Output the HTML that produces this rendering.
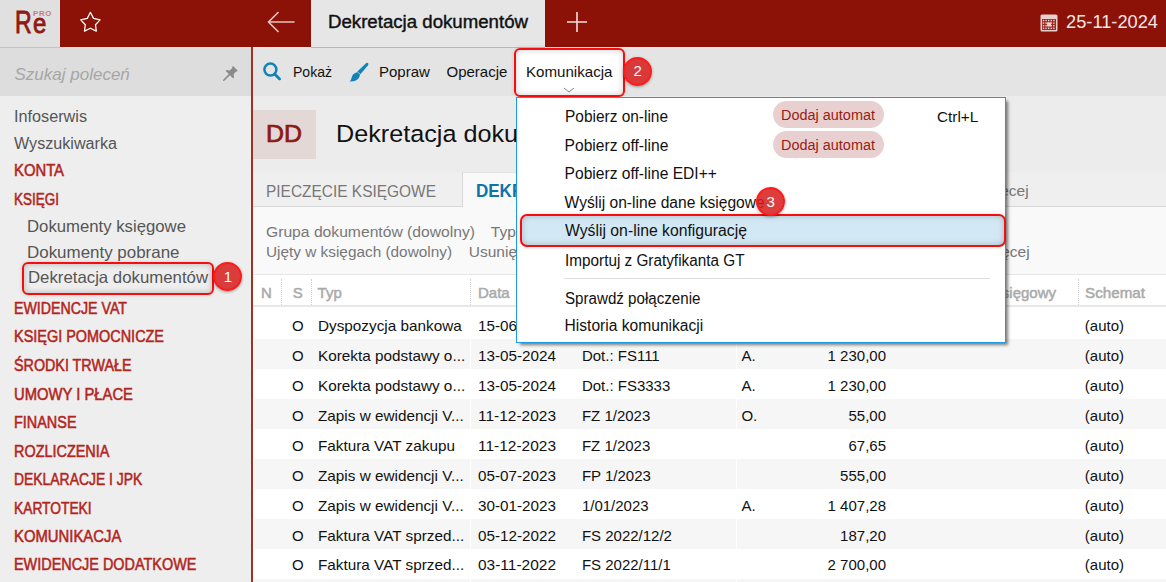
<!DOCTYPE html><html><head><meta charset="utf-8"><style>html,body{margin:0;padding:0;width:1166px;height:582px;overflow:hidden;background:#eee;position:relative}.t{position:absolute;white-space:pre;font-family:"Liberation Sans", sans-serif}</style></head><body><div style="position:absolute;left:0px;top:0px;width:1166px;height:47px;background:#8c1107;"></div>
<div style="position:absolute;left:0px;top:0px;width:60px;height:47px;background:#e0e0e0;"></div>
<div style="position:absolute;left:311px;top:0px;width:234px;height:47px;background:#e6e6e6;"></div>
<span id="t3" class="t" style="left:14.50px;transform-origin:left 26px;top:7.00px;font-size:31px;line-height:31px;color:#8f1a12;font-weight:400;font-style:normal;-webkit-text-stroke:0.9px #8f1a12;transform:scale(0.7458,1.0000);">R</span>
<span id="t4" class="t" style="left:33.00px;transform-origin:left 24px;top:9.00px;font-size:28.5px;line-height:28.5px;color:#8f1a12;font-weight:400;font-style:normal;-webkit-text-stroke:0.9px #8f1a12;transform:scale(0.8386,1.0000);">e</span>
<span id="t5" class="t" style="left:33.00px;transform-origin:left 6px;top:10.00px;font-size:7.8px;line-height:7.8px;color:#c47d79;font-weight:700;font-style:normal;letter-spacing:0.8px;transform:scale(0.9950,1.0000);">PRO</span>
<span id="t6" class="t" style="left:327.70px;transform-origin:left 14px;top:14.00px;font-size:17.5px;line-height:17.5px;color:#111;font-weight:400;font-style:normal;-webkit-text-stroke:0.4px #111;transform:scale(1.0653,1.0000);">Dekretacja dokumentów</span>
<span id="t7" class="t" style="left:1065.60px;transform-origin:left 15px;top:13.00px;font-size:18.2px;line-height:18.2px;color:#f4e6e6;font-weight:400;font-style:normal;transform:scale(1.0034,1.0000);">25-11-2024</span>
<div style="position:absolute;left:0px;top:47px;width:251px;height:49px;background:#dddddd;"></div>
<div style="position:absolute;left:0px;top:47px;width:60px;height:1px;background:#d7bcb8;"></div>
<div style="position:absolute;left:0px;top:96px;width:251px;height:486px;background:#eeeeee;"></div>
<div style="position:absolute;left:251px;top:47px;width:2px;height:535px;background:#9d3325;"></div>
<span id="t12" class="t" style="left:14.50px;transform-origin:left 14px;top:66.00px;font-size:17px;line-height:17px;color:#a6a6a6;font-weight:400;font-style:italic;">Szukaj poleceń</span>
<span id="t13" class="t" style="left:13.90px;transform-origin:left 13px;top:109.00px;font-size:16px;line-height:16px;color:#555555;font-weight:400;font-style:normal;transform:scale(1.0134,1.0000);">Infoserwis</span>
<span id="t14" class="t" style="left:13.90px;transform-origin:left 13px;top:136.00px;font-size:16px;line-height:16px;color:#555555;font-weight:400;font-style:normal;transform:scale(1.0089,1.0000);">Wyszukiwarka</span>
<span id="t15" class="t" style="left:13.90px;transform-origin:left 13px;top:163.00px;font-size:15.3px;line-height:15.3px;color:#b3241b;font-weight:400;font-style:normal;-webkit-text-stroke:0.5px #b3241b;transform:scale(0.9697,1.0400);">KONTA</span>
<span id="t16" class="t" style="left:13.90px;transform-origin:left 13px;top:192.00px;font-size:15.3px;line-height:15.3px;color:#b3241b;font-weight:400;font-style:normal;-webkit-text-stroke:0.5px #b3241b;transform:scale(0.8821,1.0400);">KSIĘGI</span>
<span id="t17" class="t" style="left:27.30px;transform-origin:left 14px;top:218.00px;font-size:16.5px;line-height:16.5px;color:#555555;font-weight:400;font-style:normal;transform:scale(1.0138,1.0000);">Dokumenty księgowe</span>
<span id="t18" class="t" style="left:27.30px;transform-origin:left 14px;top:244.00px;font-size:16.5px;line-height:16.5px;color:#555555;font-weight:400;font-style:normal;transform:scale(1.0263,1.0000);">Dokumenty pobrane</span>
<div style="position:absolute;left:21.5px;top:262px;width:192.5px;height:32.5px;background:transparent;border:2.5px solid #f70d0d;border-radius:6px;box-sizing:border-box;box-shadow:inset 0 0 6px rgba(0,0,0,.25), 0 0 4px rgba(0,0,0,.12)"></div>
<span id="t20" class="t" style="left:27.50px;transform-origin:left 14px;top:269.00px;font-size:16.5px;line-height:16.5px;color:#555555;font-weight:400;font-style:normal;transform:scale(1.0169,1.0000);">Dekretacja dokumentów</span>
<span id="t21" class="t" style="left:14.00px;transform-origin:left 13px;top:301.00px;font-size:15.3px;line-height:15.3px;color:#b3241b;font-weight:400;font-style:normal;-webkit-text-stroke:0.5px #b3241b;transform:scale(0.9275,1.0400);">EWIDENCJE VAT</span>
<span id="t22" class="t" style="left:14.00px;transform-origin:left 13px;top:329.00px;font-size:15.3px;line-height:15.3px;color:#b3241b;font-weight:400;font-style:normal;-webkit-text-stroke:0.5px #b3241b;transform:scale(0.9438,1.0400);">KSIĘGI POMOCNICZE</span>
<span id="t23" class="t" style="left:14.00px;transform-origin:left 13px;top:358.00px;font-size:15.3px;line-height:15.3px;color:#b3241b;font-weight:400;font-style:normal;-webkit-text-stroke:0.5px #b3241b;transform:scale(0.9360,1.0400);">ŚRODKI TRWAŁE</span>
<span id="t24" class="t" style="left:14.00px;transform-origin:left 13px;top:387.00px;font-size:15.3px;line-height:15.3px;color:#b3241b;font-weight:400;font-style:normal;-webkit-text-stroke:0.5px #b3241b;transform:scale(0.9677,1.0400);">UMOWY I PŁACE</span>
<span id="t25" class="t" style="left:14.00px;transform-origin:left 13px;top:415.00px;font-size:15.3px;line-height:15.3px;color:#b3241b;font-weight:400;font-style:normal;-webkit-text-stroke:0.5px #b3241b;transform:scale(0.9427,1.0400);">FINANSE</span>
<span id="t26" class="t" style="left:14.00px;transform-origin:left 13px;top:444.00px;font-size:15.3px;line-height:15.3px;color:#b3241b;font-weight:400;font-style:normal;-webkit-text-stroke:0.5px #b3241b;transform:scale(0.9432,1.0400);">ROZLICZENIA</span>
<span id="t27" class="t" style="left:14.00px;transform-origin:left 13px;top:472.00px;font-size:15.3px;line-height:15.3px;color:#b3241b;font-weight:400;font-style:normal;-webkit-text-stroke:0.5px #b3241b;transform:scale(0.9091,1.0400);">DEKLARACJE I JPK</span>
<span id="t28" class="t" style="left:14.00px;transform-origin:left 13px;top:501.00px;font-size:15.3px;line-height:15.3px;color:#b3241b;font-weight:400;font-style:normal;-webkit-text-stroke:0.5px #b3241b;transform:scale(0.9007,1.0400);">KARTOTEKI</span>
<span id="t29" class="t" style="left:14.00px;transform-origin:left 13px;top:529.00px;font-size:15.3px;line-height:15.3px;color:#b3241b;font-weight:400;font-style:normal;-webkit-text-stroke:0.5px #b3241b;transform:scale(0.9710,1.0400);">KOMUNIKACJA</span>
<span id="t30" class="t" style="left:14.00px;transform-origin:left 13px;top:557.00px;font-size:15.3px;line-height:15.3px;color:#b3241b;font-weight:400;font-style:normal;-webkit-text-stroke:0.5px #b3241b;transform:scale(0.9427,1.0400);">EWIDENCJE DODATKOWE</span>
<div style="position:absolute;left:253px;top:47px;width:913px;height:49px;background:#e4e4e4;"></div>
<div style="position:absolute;left:253px;top:47px;width:913px;height:1px;background:#ebebeb;"></div>
<div style="position:absolute;left:311px;top:47px;width:234px;height:1px;background:#cdb0aa;"></div>
<div style="position:absolute;left:253px;top:96px;width:913px;height:76px;background:#ececec;"></div>
<div style="position:absolute;left:253px;top:110px;width:63px;height:49px;background:#e4d8d6;"></div>
<span id="t36" class="t" style="left:266.20px;transform-origin:left 19px;top:123.00px;font-size:23.5px;line-height:23.5px;color:#8b1a12;font-weight:400;font-style:normal;-webkit-text-stroke:0.7px #8b1a12;transform:scale(1.0603,1.0000);">DD</span>
<span id="t37" class="t" style="left:335.70px;transform-origin:left 20px;top:122.00px;font-size:24.5px;line-height:24.5px;color:#111;font-weight:400;font-style:normal;transform:scale(1.0280,1.0000);">Dekretacja dokumentów</span>
<div style="position:absolute;left:253px;top:172px;width:913px;height:34px;background:#efefef;"></div>
<div style="position:absolute;left:253px;top:206px;width:913px;height:1px;background:#d6d6d6;"></div>
<div style="position:absolute;left:462px;top:172px;width:176px;height:35px;background:#f9f9f9;border-left:1px solid #d8d8d8;border-top:1px solid #e2e2e2;box-sizing:border-box"></div>
<span id="t41" class="t" style="left:266.20px;transform-origin:left 14px;top:183.00px;font-size:17px;line-height:17px;color:#777777;font-weight:400;font-style:normal;transform:scale(0.9089,1.0000);">PIECZĘCIE KSIĘGOWE</span>
<span id="t42" class="t" style="left:475.90px;transform-origin:left 14px;top:183.00px;font-size:17.5px;line-height:17.5px;color:#0f72a8;font-weight:700;font-style:normal;transform:scale(0.9715,1.0000);">DEKRETACJE</span>
<span id="t43" class="t" style="right:137.40px;transform-origin:right 13px;top:183.00px;font-size:15.5px;line-height:15.5px;color:#777777;font-weight:400;font-style:normal;">Pokaż więcej</span>
<div style="position:absolute;left:253px;top:207px;width:913px;height:68px;background:#f9f9f9;"></div>
<div style="position:absolute;left:253px;top:274px;width:913px;height:1px;background:#e6e6e6;"></div>
<span id="t46" class="t" style="left:265.70px;transform-origin:left 13px;top:224.00px;font-size:15.5px;line-height:15.5px;color:#777777;font-weight:400;font-style:normal;transform:scale(1.0107,1.0000);">Grupa dokumentów (dowolny)</span>
<span id="t47" class="t" style="left:490.80px;transform-origin:left 13px;top:224.00px;font-size:15.5px;line-height:15.5px;color:#777777;font-weight:400;font-style:normal;">Typ dokumentu (dowolny)</span>
<span id="t48" class="t" style="left:265.70px;transform-origin:left 13px;top:244.00px;font-size:15.5px;line-height:15.5px;color:#777777;font-weight:400;font-style:normal;transform:scale(0.9904,1.0000);">Ujęty w księgach (dowolny)</span>
<span id="t49" class="t" style="left:468.80px;transform-origin:left 13px;top:244.00px;font-size:15.5px;line-height:15.5px;color:#777777;font-weight:400;font-style:normal;">Usunięte (dowolny)</span>
<span id="t50" class="t" style="right:136.40px;transform-origin:right 13px;top:244.00px;font-size:15.5px;line-height:15.5px;color:#777777;font-weight:400;font-style:normal;">Pokaż więcej</span>
<div style="position:absolute;left:253px;top:275px;width:913px;height:307px;background:#ffffff;"></div>
<div style="position:absolute;left:253px;top:305px;width:913px;height:2px;background:#e8e8e8;"></div>
<span id="t53" class="t" style="left:261.00px;transform-origin:left 13px;top:285.00px;font-size:15px;line-height:15px;color:#aaaaaa;font-weight:400;font-style:normal;-webkit-text-stroke:0.5px #aaaaaa;">N</span>
<span id="t54" class="t" style="left:292.80px;transform-origin:left 13px;top:285.00px;font-size:15px;line-height:15px;color:#aaaaaa;font-weight:400;font-style:normal;-webkit-text-stroke:0.5px #aaaaaa;">S</span>
<span id="t55" class="t" style="left:317.60px;transform-origin:left 13px;top:285.00px;font-size:15px;line-height:15px;color:#aaaaaa;font-weight:400;font-style:normal;-webkit-text-stroke:0.5px #aaaaaa;">Typ</span>
<span id="t56" class="t" style="left:478.00px;transform-origin:left 13px;top:285.00px;font-size:15px;line-height:15px;color:#aaaaaa;font-weight:400;font-style:normal;-webkit-text-stroke:0.5px #aaaaaa;">Data</span>
<span id="t57" class="t" style="left:582.00px;transform-origin:left 13px;top:285.00px;font-size:15px;line-height:15px;color:#aaaaaa;font-weight:400;font-style:normal;-webkit-text-stroke:0.5px #aaaaaa;">Dokument</span>
<span id="t58" class="t" style="right:110.00px;transform-origin:right 13px;top:285.00px;font-size:15px;line-height:15px;color:#aaaaaa;font-weight:400;font-style:normal;-webkit-text-stroke:0.5px #aaaaaa;">Konto księgowy</span>
<span id="t59" class="t" style="left:1084.80px;transform-origin:left 13px;top:285.00px;font-size:15px;line-height:15px;color:#aaaaaa;font-weight:400;font-style:normal;-webkit-text-stroke:0.5px #aaaaaa;transform:scale(1.0135,1.0000);">Schemat</span>
<div style="position:absolute;left:281px;top:279px;width:0;height:26px;border-left:1px dotted #cfcfcf"></div>
<div style="position:absolute;left:311px;top:279px;width:0;height:26px;border-left:1px dotted #cfcfcf"></div>
<div style="position:absolute;left:470px;top:279px;width:0;height:26px;border-left:1px dotted #cfcfcf"></div>
<div style="position:absolute;left:1078px;top:279px;width:0;height:26px;border-left:1px dotted #cfcfcf"></div>
<div style="position:absolute;left:254px;top:339.4px;width:912px;height:29.9px;background:#f6f6f6;"></div>
<div style="position:absolute;left:470px;top:339.4px;width:1px;height:29.9px;background:#ffffff;"></div>
<div style="position:absolute;left:736px;top:339.4px;width:1px;height:29.9px;background:#ffffff;"></div>
<div style="position:absolute;left:254px;top:399.2px;width:912px;height:29.9px;background:#f6f6f6;"></div>
<div style="position:absolute;left:470px;top:399.2px;width:1px;height:29.9px;background:#ffffff;"></div>
<div style="position:absolute;left:736px;top:399.2px;width:1px;height:29.9px;background:#ffffff;"></div>
<div style="position:absolute;left:254px;top:459.0px;width:912px;height:29.9px;background:#f6f6f6;"></div>
<div style="position:absolute;left:470px;top:459.0px;width:1px;height:29.9px;background:#ffffff;"></div>
<div style="position:absolute;left:736px;top:459.0px;width:1px;height:29.9px;background:#ffffff;"></div>
<div style="position:absolute;left:254px;top:518.8px;width:912px;height:29.9px;background:#f6f6f6;"></div>
<div style="position:absolute;left:470px;top:518.8px;width:1px;height:29.9px;background:#ffffff;"></div>
<div style="position:absolute;left:736px;top:518.8px;width:1px;height:29.9px;background:#ffffff;"></div>
<div style="position:absolute;left:254px;top:578.6px;width:912px;height:29.9px;background:#f6f6f6;"></div>
<div style="position:absolute;left:470px;top:578.6px;width:1px;height:29.9px;background:#ffffff;"></div>
<div style="position:absolute;left:736px;top:578.6px;width:1px;height:29.9px;background:#ffffff;"></div>
<span id="t79" class="t" style="left:292.00px;transform-origin:left 13px;top:318.00px;font-size:15px;line-height:15px;color:#111;font-weight:400;font-style:normal;">O</span>
<span id="t80" class="t" style="left:318.00px;transform-origin:left 13px;top:318.00px;font-size:15px;line-height:15px;color:#111;font-weight:400;font-style:normal;transform:scale(1.0200,1.0000);">Dyspozycja bankowa</span>
<span id="t81" class="t" style="left:478.00px;transform-origin:left 13px;top:318.00px;font-size:15px;line-height:15px;color:#111;font-weight:400;font-style:normal;transform:scale(1.0165,1.0000);">15-06-2024</span>
<span id="t82" class="t" style="left:1084.80px;transform-origin:left 13px;top:318.00px;font-size:15px;line-height:15px;color:#111;font-weight:400;font-style:normal;">(auto)</span>
<span id="t83" class="t" style="left:292.00px;transform-origin:left 13px;top:348.00px;font-size:15px;line-height:15px;color:#111;font-weight:400;font-style:normal;">O</span>
<span id="t84" class="t" style="left:318.00px;transform-origin:left 13px;top:348.00px;font-size:15px;line-height:15px;color:#111;font-weight:400;font-style:normal;transform:scale(1.0200,1.0000);">Korekta podstawy o...</span>
<span id="t85" class="t" style="left:478.00px;transform-origin:left 13px;top:348.00px;font-size:15px;line-height:15px;color:#111;font-weight:400;font-style:normal;transform:scale(1.0165,1.0000);">13-05-2024</span>
<span id="t86" class="t" style="left:581.90px;transform-origin:left 13px;top:348.00px;font-size:15px;line-height:15px;color:#111;font-weight:400;font-style:normal;">Dot.: FS111</span>
<span id="t87" class="t" style="left:741.40px;transform-origin:left 13px;top:348.00px;font-size:15px;line-height:15px;color:#111;font-weight:400;font-style:normal;">A.</span>
<span id="t88" class="t" style="right:280.00px;transform-origin:right 13px;top:348.00px;font-size:15px;line-height:15px;color:#111;font-weight:400;font-style:normal;">1 230,00</span>
<span id="t89" class="t" style="left:1084.80px;transform-origin:left 13px;top:348.00px;font-size:15px;line-height:15px;color:#111;font-weight:400;font-style:normal;">(auto)</span>
<span id="t90" class="t" style="left:292.00px;transform-origin:left 13px;top:378.00px;font-size:15px;line-height:15px;color:#111;font-weight:400;font-style:normal;">O</span>
<span id="t91" class="t" style="left:318.00px;transform-origin:left 13px;top:378.00px;font-size:15px;line-height:15px;color:#111;font-weight:400;font-style:normal;transform:scale(1.0200,1.0000);">Korekta podstawy o...</span>
<span id="t92" class="t" style="left:478.00px;transform-origin:left 13px;top:378.00px;font-size:15px;line-height:15px;color:#111;font-weight:400;font-style:normal;transform:scale(1.0165,1.0000);">13-05-2024</span>
<span id="t93" class="t" style="left:581.90px;transform-origin:left 13px;top:378.00px;font-size:15px;line-height:15px;color:#111;font-weight:400;font-style:normal;">Dot.: FS3333</span>
<span id="t94" class="t" style="left:741.40px;transform-origin:left 13px;top:378.00px;font-size:15px;line-height:15px;color:#111;font-weight:400;font-style:normal;">A.</span>
<span id="t95" class="t" style="right:280.00px;transform-origin:right 13px;top:378.00px;font-size:15px;line-height:15px;color:#111;font-weight:400;font-style:normal;">1 230,00</span>
<span id="t96" class="t" style="left:1084.80px;transform-origin:left 13px;top:378.00px;font-size:15px;line-height:15px;color:#111;font-weight:400;font-style:normal;">(auto)</span>
<span id="t97" class="t" style="left:292.00px;transform-origin:left 13px;top:408.00px;font-size:15px;line-height:15px;color:#111;font-weight:400;font-style:normal;">O</span>
<span id="t98" class="t" style="left:318.00px;transform-origin:left 13px;top:408.00px;font-size:15px;line-height:15px;color:#111;font-weight:400;font-style:normal;transform:scale(1.0200,1.0000);">Zapis w ewidencji V...</span>
<span id="t99" class="t" style="left:478.00px;transform-origin:left 13px;top:408.00px;font-size:15px;line-height:15px;color:#111;font-weight:400;font-style:normal;transform:scale(1.0314,1.0000);">11-12-2023</span>
<span id="t100" class="t" style="left:581.90px;transform-origin:left 13px;top:408.00px;font-size:15px;line-height:15px;color:#111;font-weight:400;font-style:normal;">FZ 1/2023</span>
<span id="t101" class="t" style="left:741.40px;transform-origin:left 13px;top:408.00px;font-size:15px;line-height:15px;color:#111;font-weight:400;font-style:normal;">O.</span>
<span id="t102" class="t" style="right:280.00px;transform-origin:right 13px;top:408.00px;font-size:15px;line-height:15px;color:#111;font-weight:400;font-style:normal;">55,00</span>
<span id="t103" class="t" style="left:1084.80px;transform-origin:left 13px;top:408.00px;font-size:15px;line-height:15px;color:#111;font-weight:400;font-style:normal;">(auto)</span>
<span id="t104" class="t" style="left:292.00px;transform-origin:left 13px;top:438.00px;font-size:15px;line-height:15px;color:#111;font-weight:400;font-style:normal;">O</span>
<span id="t105" class="t" style="left:318.00px;transform-origin:left 13px;top:438.00px;font-size:15px;line-height:15px;color:#111;font-weight:400;font-style:normal;transform:scale(1.0200,1.0000);">Faktura VAT zakupu</span>
<span id="t106" class="t" style="left:478.00px;transform-origin:left 13px;top:438.00px;font-size:15px;line-height:15px;color:#111;font-weight:400;font-style:normal;transform:scale(1.0314,1.0000);">11-12-2023</span>
<span id="t107" class="t" style="left:581.90px;transform-origin:left 13px;top:438.00px;font-size:15px;line-height:15px;color:#111;font-weight:400;font-style:normal;">FZ 1/2023</span>
<span id="t108" class="t" style="right:280.00px;transform-origin:right 13px;top:438.00px;font-size:15px;line-height:15px;color:#111;font-weight:400;font-style:normal;">67,65</span>
<span id="t109" class="t" style="left:1084.80px;transform-origin:left 13px;top:438.00px;font-size:15px;line-height:15px;color:#111;font-weight:400;font-style:normal;">(auto)</span>
<span id="t110" class="t" style="left:292.00px;transform-origin:left 13px;top:468.00px;font-size:15px;line-height:15px;color:#111;font-weight:400;font-style:normal;">O</span>
<span id="t111" class="t" style="left:318.00px;transform-origin:left 13px;top:468.00px;font-size:15px;line-height:15px;color:#111;font-weight:400;font-style:normal;transform:scale(1.0200,1.0000);">Zapis w ewidencji V...</span>
<span id="t112" class="t" style="left:478.00px;transform-origin:left 13px;top:468.00px;font-size:15px;line-height:15px;color:#111;font-weight:400;font-style:normal;transform:scale(1.0165,1.0000);">05-07-2023</span>
<span id="t113" class="t" style="left:581.90px;transform-origin:left 13px;top:468.00px;font-size:15px;line-height:15px;color:#111;font-weight:400;font-style:normal;">FP 1/2023</span>
<span id="t114" class="t" style="right:280.00px;transform-origin:right 13px;top:468.00px;font-size:15px;line-height:15px;color:#111;font-weight:400;font-style:normal;">555,00</span>
<span id="t115" class="t" style="left:1084.80px;transform-origin:left 13px;top:468.00px;font-size:15px;line-height:15px;color:#111;font-weight:400;font-style:normal;">(auto)</span>
<span id="t116" class="t" style="left:292.00px;transform-origin:left 13px;top:498.00px;font-size:15px;line-height:15px;color:#111;font-weight:400;font-style:normal;">O</span>
<span id="t117" class="t" style="left:318.00px;transform-origin:left 13px;top:498.00px;font-size:15px;line-height:15px;color:#111;font-weight:400;font-style:normal;transform:scale(1.0200,1.0000);">Zapis w ewidencji V...</span>
<span id="t118" class="t" style="left:478.00px;transform-origin:left 13px;top:498.00px;font-size:15px;line-height:15px;color:#111;font-weight:400;font-style:normal;transform:scale(1.0165,1.0000);">30-01-2023</span>
<span id="t119" class="t" style="left:581.90px;transform-origin:left 13px;top:498.00px;font-size:15px;line-height:15px;color:#111;font-weight:400;font-style:normal;">1/01/2023</span>
<span id="t120" class="t" style="left:741.40px;transform-origin:left 13px;top:498.00px;font-size:15px;line-height:15px;color:#111;font-weight:400;font-style:normal;">A.</span>
<span id="t121" class="t" style="right:280.00px;transform-origin:right 13px;top:498.00px;font-size:15px;line-height:15px;color:#111;font-weight:400;font-style:normal;">1 407,28</span>
<span id="t122" class="t" style="left:1084.80px;transform-origin:left 13px;top:498.00px;font-size:15px;line-height:15px;color:#111;font-weight:400;font-style:normal;">(auto)</span>
<span id="t123" class="t" style="left:292.00px;transform-origin:left 13px;top:528.00px;font-size:15px;line-height:15px;color:#111;font-weight:400;font-style:normal;">O</span>
<span id="t124" class="t" style="left:318.00px;transform-origin:left 13px;top:528.00px;font-size:15px;line-height:15px;color:#111;font-weight:400;font-style:normal;transform:scale(1.0200,1.0000);">Faktura VAT sprzed...</span>
<span id="t125" class="t" style="left:478.00px;transform-origin:left 13px;top:528.00px;font-size:15px;line-height:15px;color:#111;font-weight:400;font-style:normal;transform:scale(1.0165,1.0000);">05-12-2022</span>
<span id="t126" class="t" style="left:581.90px;transform-origin:left 13px;top:528.00px;font-size:15px;line-height:15px;color:#111;font-weight:400;font-style:normal;">FS 2022/12/2</span>
<span id="t127" class="t" style="right:280.00px;transform-origin:right 13px;top:528.00px;font-size:15px;line-height:15px;color:#111;font-weight:400;font-style:normal;">187,20</span>
<span id="t128" class="t" style="left:1084.80px;transform-origin:left 13px;top:528.00px;font-size:15px;line-height:15px;color:#111;font-weight:400;font-style:normal;">(auto)</span>
<span id="t129" class="t" style="left:292.00px;transform-origin:left 13px;top:557.00px;font-size:15px;line-height:15px;color:#111;font-weight:400;font-style:normal;">O</span>
<span id="t130" class="t" style="left:318.00px;transform-origin:left 13px;top:557.00px;font-size:15px;line-height:15px;color:#111;font-weight:400;font-style:normal;transform:scale(1.0200,1.0000);">Faktura VAT sprzed...</span>
<span id="t131" class="t" style="left:478.00px;transform-origin:left 13px;top:557.00px;font-size:15px;line-height:15px;color:#111;font-weight:400;font-style:normal;transform:scale(1.0314,1.0000);">03-11-2022</span>
<span id="t132" class="t" style="left:581.90px;transform-origin:left 13px;top:557.00px;font-size:15px;line-height:15px;color:#111;font-weight:400;font-style:normal;">FS 2022/11/1</span>
<span id="t133" class="t" style="right:280.00px;transform-origin:right 13px;top:557.00px;font-size:15px;line-height:15px;color:#111;font-weight:400;font-style:normal;">2 700,00</span>
<span id="t134" class="t" style="left:1084.80px;transform-origin:left 13px;top:557.00px;font-size:15px;line-height:15px;color:#111;font-weight:400;font-style:normal;">(auto)</span>
<span id="t135" class="t" style="left:292.60px;transform-origin:left 13px;top:64.00px;font-size:15px;line-height:15px;color:#111;font-weight:400;font-style:normal;transform:scale(0.9352,1.0000);">Pokaż</span>
<span id="t136" class="t" style="left:379.00px;transform-origin:left 13px;top:64.00px;font-size:15px;line-height:15px;color:#111;font-weight:400;font-style:normal;">Popraw</span>
<span id="t137" class="t" style="left:446.50px;transform-origin:left 13px;top:64.00px;font-size:15px;line-height:15px;color:#111;font-weight:400;font-style:normal;">Operacje</span>
<div style="position:absolute;left:513.5px;top:48px;width:111px;height:48.5px;background:#ffffff;border:2.5px solid #f70d0d;border-radius:6px;box-sizing:border-box;box-shadow:inset 0 0 6px rgba(0,0,0,.2), 0 0 4px rgba(0,0,0,.12)"></div>
<span id="t139" class="t" style="left:526.00px;transform-origin:left 13px;top:64.00px;font-size:15px;line-height:15px;color:#111;font-weight:400;font-style:normal;transform:scale(1.0071,1.0000);">Komunikacja</span>
<div style="position:absolute;left:516px;top:97px;width:490px;height:246px;background:#fff;border:1px solid #1b9be2;box-sizing:border-box;box-shadow:3px 3px 3px -1px rgba(0,0,0,.5)"></div>
<div style="position:absolute;left:773px;top:101px;width:111px;height:27px;background:#e9d0d0;border-radius:13.5px"></div>
<div style="position:absolute;left:773px;top:131px;width:111px;height:27px;background:#e9d0d0;border-radius:13.5px"></div>
<span id="t143" class="t" style="left:781.20px;transform-origin:left 12px;top:108.00px;font-size:14px;line-height:14px;color:#9a1c12;font-weight:400;font-style:normal;transform:scale(1.0323,1.0000);">Dodaj automat</span>
<span id="t144" class="t" style="left:781.20px;transform-origin:left 12px;top:138.00px;font-size:14px;line-height:14px;color:#9a1c12;font-weight:400;font-style:normal;transform:scale(1.0323,1.0000);">Dodaj automat</span>
<span id="t145" class="t" style="left:936.50px;transform-origin:left 13px;top:109.00px;font-size:15px;line-height:15px;color:#111;font-weight:400;font-style:normal;transform:scale(1.0213,1.0000);">Ctrl+L</span>
<div style="position:absolute;left:519.5px;top:214px;width:486px;height:33px;background:#d3e8f5;border:2.5px solid #f70d0d;border-radius:7px;box-sizing:border-box;box-shadow:inset 0 0 6px rgba(0,0,0,.22), 0 0 4px rgba(0,0,0,.12)"></div>
<div style="position:absolute;left:564px;top:278px;width:426px;height:1px;background:#dedede;"></div>
<span id="t148" class="t" style="left:564.60px;transform-origin:left 13px;top:109.00px;font-size:15.6px;line-height:15.6px;color:#111;font-weight:400;font-style:normal;transform:scale(0.9901,1.0000);">Pobierz on-line</span>
<span id="t149" class="t" style="left:564.60px;transform-origin:left 13px;top:138.00px;font-size:15.6px;line-height:15.6px;color:#111;font-weight:400;font-style:normal;">Pobierz off-line</span>
<span id="t150" class="t" style="left:564.60px;transform-origin:left 13px;top:166.00px;font-size:15.6px;line-height:15.6px;color:#111;font-weight:400;font-style:normal;">Pobierz off-line EDI++</span>
<span id="t151" class="t" style="left:564.60px;transform-origin:left 13px;top:195.00px;font-size:15.6px;line-height:15.6px;color:#111;font-weight:400;font-style:normal;">Wyślij on-line dane księgowe</span>
<span id="t152" class="t" style="left:564.60px;transform-origin:left 13px;top:223.00px;font-size:15.6px;line-height:15.6px;color:#111;font-weight:400;font-style:normal;transform:scale(1.0103,1.0000);">Wyślij on-line konfigurację</span>
<span id="t153" class="t" style="left:564.60px;transform-origin:left 13px;top:253.00px;font-size:15.6px;line-height:15.6px;color:#111;font-weight:400;font-style:normal;transform:scale(0.9816,1.0000);">Importuj z Gratyfikanta GT</span>
<span id="t154" class="t" style="left:564.60px;transform-origin:left 13px;top:291.00px;font-size:15.6px;line-height:15.6px;color:#111;font-weight:400;font-style:normal;transform:scale(0.9709,1.0000);">Sprawdź połączenie</span>
<span id="t155" class="t" style="left:564.60px;transform-origin:left 13px;top:318.00px;font-size:15.6px;line-height:15.6px;color:#111;font-weight:400;font-style:normal;">Historia komunikacji</span>
<div style="position:absolute;left:213.3px;top:262.1px;width:29px;height:29px;border-radius:50%;background:rgba(214,30,30,.86);border:2px solid #ff1a1a;box-sizing:border-box;box-shadow:0 1px 3px rgba(0,0,0,.35);display:flex;align-items:center;justify-content:center;color:#fff;font-family:'Liberation Sans',sans-serif;font-size:15px;padding-bottom:1px">1</div>
<div style="position:absolute;left:623.2px;top:56.7px;width:29px;height:29px;border-radius:50%;background:rgba(214,30,30,.86);border:2px solid #ff1a1a;box-sizing:border-box;box-shadow:0 1px 3px rgba(0,0,0,.35);display:flex;align-items:center;justify-content:center;color:#fff;font-family:'Liberation Sans',sans-serif;font-size:15px;padding-bottom:1px">2</div>
<div style="position:absolute;left:756.1px;top:187.0px;width:29px;height:29px;border-radius:50%;background:rgba(214,30,30,.86);border:2px solid #ff1a1a;box-sizing:border-box;box-shadow:0 1px 3px rgba(0,0,0,.35);display:flex;align-items:center;justify-content:center;color:#fff;font-family:'Liberation Sans',sans-serif;font-size:15px;padding-bottom:1px">3</div>
<svg style="position:absolute;left:78px;top:10px" width="24" height="24" viewBox="0 0 24 24"><path d="M12.4 2.3 L15.5 8.4 L22.1 9.9 L17.5 14.7 L18.3 21.1 L12.4 18.2 L6.5 21.1 L7.3 14.7 L2.7 9.9 L9.3 8.4 Z" fill="none" stroke="#fff" stroke-width="1.25" stroke-linejoin="round"/></svg>
<svg style="position:absolute;left:266px;top:10px" width="30" height="24" viewBox="0 0 30 24"><path d="M2.5 12 H28.5 M12.5 2 L2.5 12 L12.5 22" fill="none" stroke="#e6c3c1" stroke-width="1.6"/></svg>
<svg style="position:absolute;left:566px;top:11px" width="22" height="22" viewBox="0 0 22 22"><path d="M11 1 V21 M1 11 H21" fill="none" stroke="#f0dede" stroke-width="1.6"/></svg>
<svg style="position:absolute;left:1040px;top:14px" width="18" height="18" viewBox="0 0 18 18"><rect x="0.5" y="0.5" width="17" height="17" rx="1.5" fill="#e8cfce"/><rect x="2" y="5" width="14" height="11" fill="#9a2a22"/><rect x="2.8" y="5.8" width="1.4" height="1.4" fill="#e8cfce"/><rect x="5.4" y="5.8" width="1.4" height="1.4" fill="#e8cfce"/><rect x="8.0" y="5.8" width="1.4" height="1.4" fill="#e8cfce"/><rect x="10.600000000000001" y="5.8" width="1.4" height="1.4" fill="#e8cfce"/><rect x="13.2" y="5.8" width="1.4" height="1.4" fill="#e8cfce"/><rect x="2.8" y="8.4" width="1.4" height="1.4" fill="#e8cfce"/><rect x="5.4" y="8.4" width="1.4" height="1.4" fill="#e8cfce"/><rect x="8.0" y="8.4" width="1.4" height="1.4" fill="#e8cfce"/><rect x="10.600000000000001" y="8.4" width="1.4" height="1.4" fill="#e8cfce"/><rect x="13.2" y="8.4" width="1.4" height="1.4" fill="#e8cfce"/><rect x="2.8" y="11.0" width="1.4" height="1.4" fill="#e8cfce"/><rect x="5.4" y="11.0" width="1.4" height="1.4" fill="#e8cfce"/><rect x="8.0" y="11.0" width="1.4" height="1.4" fill="#e8cfce"/><rect x="10.600000000000001" y="11.0" width="1.4" height="1.4" fill="#e8cfce"/><rect x="13.2" y="11.0" width="1.4" height="1.4" fill="#e8cfce"/><rect x="2.8" y="13.600000000000001" width="1.4" height="1.4" fill="#e8cfce"/><rect x="5.4" y="13.600000000000001" width="1.4" height="1.4" fill="#e8cfce"/><rect x="8.0" y="13.600000000000001" width="1.4" height="1.4" fill="#e8cfce"/><rect x="10.600000000000001" y="13.600000000000001" width="1.4" height="1.4" fill="#e8cfce"/><rect x="13.2" y="13.600000000000001" width="1.4" height="1.4" fill="#e8cfce"/><rect x="7" y="8.4" width="4" height="4" fill="#e8cfce"/></svg>
<svg style="position:absolute;left:262px;top:62px" width="21" height="21" viewBox="0 0 21 21"><circle cx="8.4" cy="7.6" r="6" fill="none" stroke="#1282b8" stroke-width="2.5"/><path d="M12.6 12 L17.6 17" stroke="#1282b8" stroke-width="2.8" stroke-linecap="round"/></svg>
<svg style="position:absolute;left:349px;top:62px" width="21" height="21" viewBox="0 0 21 21"><path d="M17.3 0.9 Q19.9 0.3 19.3 2.9 L11.4 12.3 L8.4 9.5 Z" fill="#1282b8"/><path d="M8.2 9.9 L11.0 12.6 Q10.3 17 6.8 18.5 Q3.8 19.7 0.6 19.4 Q2.2 18 2.7 15.4 Q3.5 11.3 7.5 10.4 Z" fill="#1282b8"/></svg>
<svg style="position:absolute;left:222px;top:64px" width="18" height="18" viewBox="0 0 18 18"><path d="M10.8 1.8 L15.8 6.8 L13.6 8.0 L11.6 10.2 L12.0 13.6 L11.2 14.4 L3.6 6.8 L4.4 6.0 L7.8 6.4 L10.0 4.2 Z" fill="#8a8a8a"/><path d="M7.4 10.6 L1.8 16.2" stroke="#8a8a8a" stroke-width="1.6" stroke-linecap="round"/></svg>
<svg style="position:absolute;left:563px;top:87px" width="12" height="6" viewBox="0 0 12 6"><path d="M1 1 L6 5 L11 1" fill="none" stroke="#888" stroke-width="1"/></svg></body></html>
